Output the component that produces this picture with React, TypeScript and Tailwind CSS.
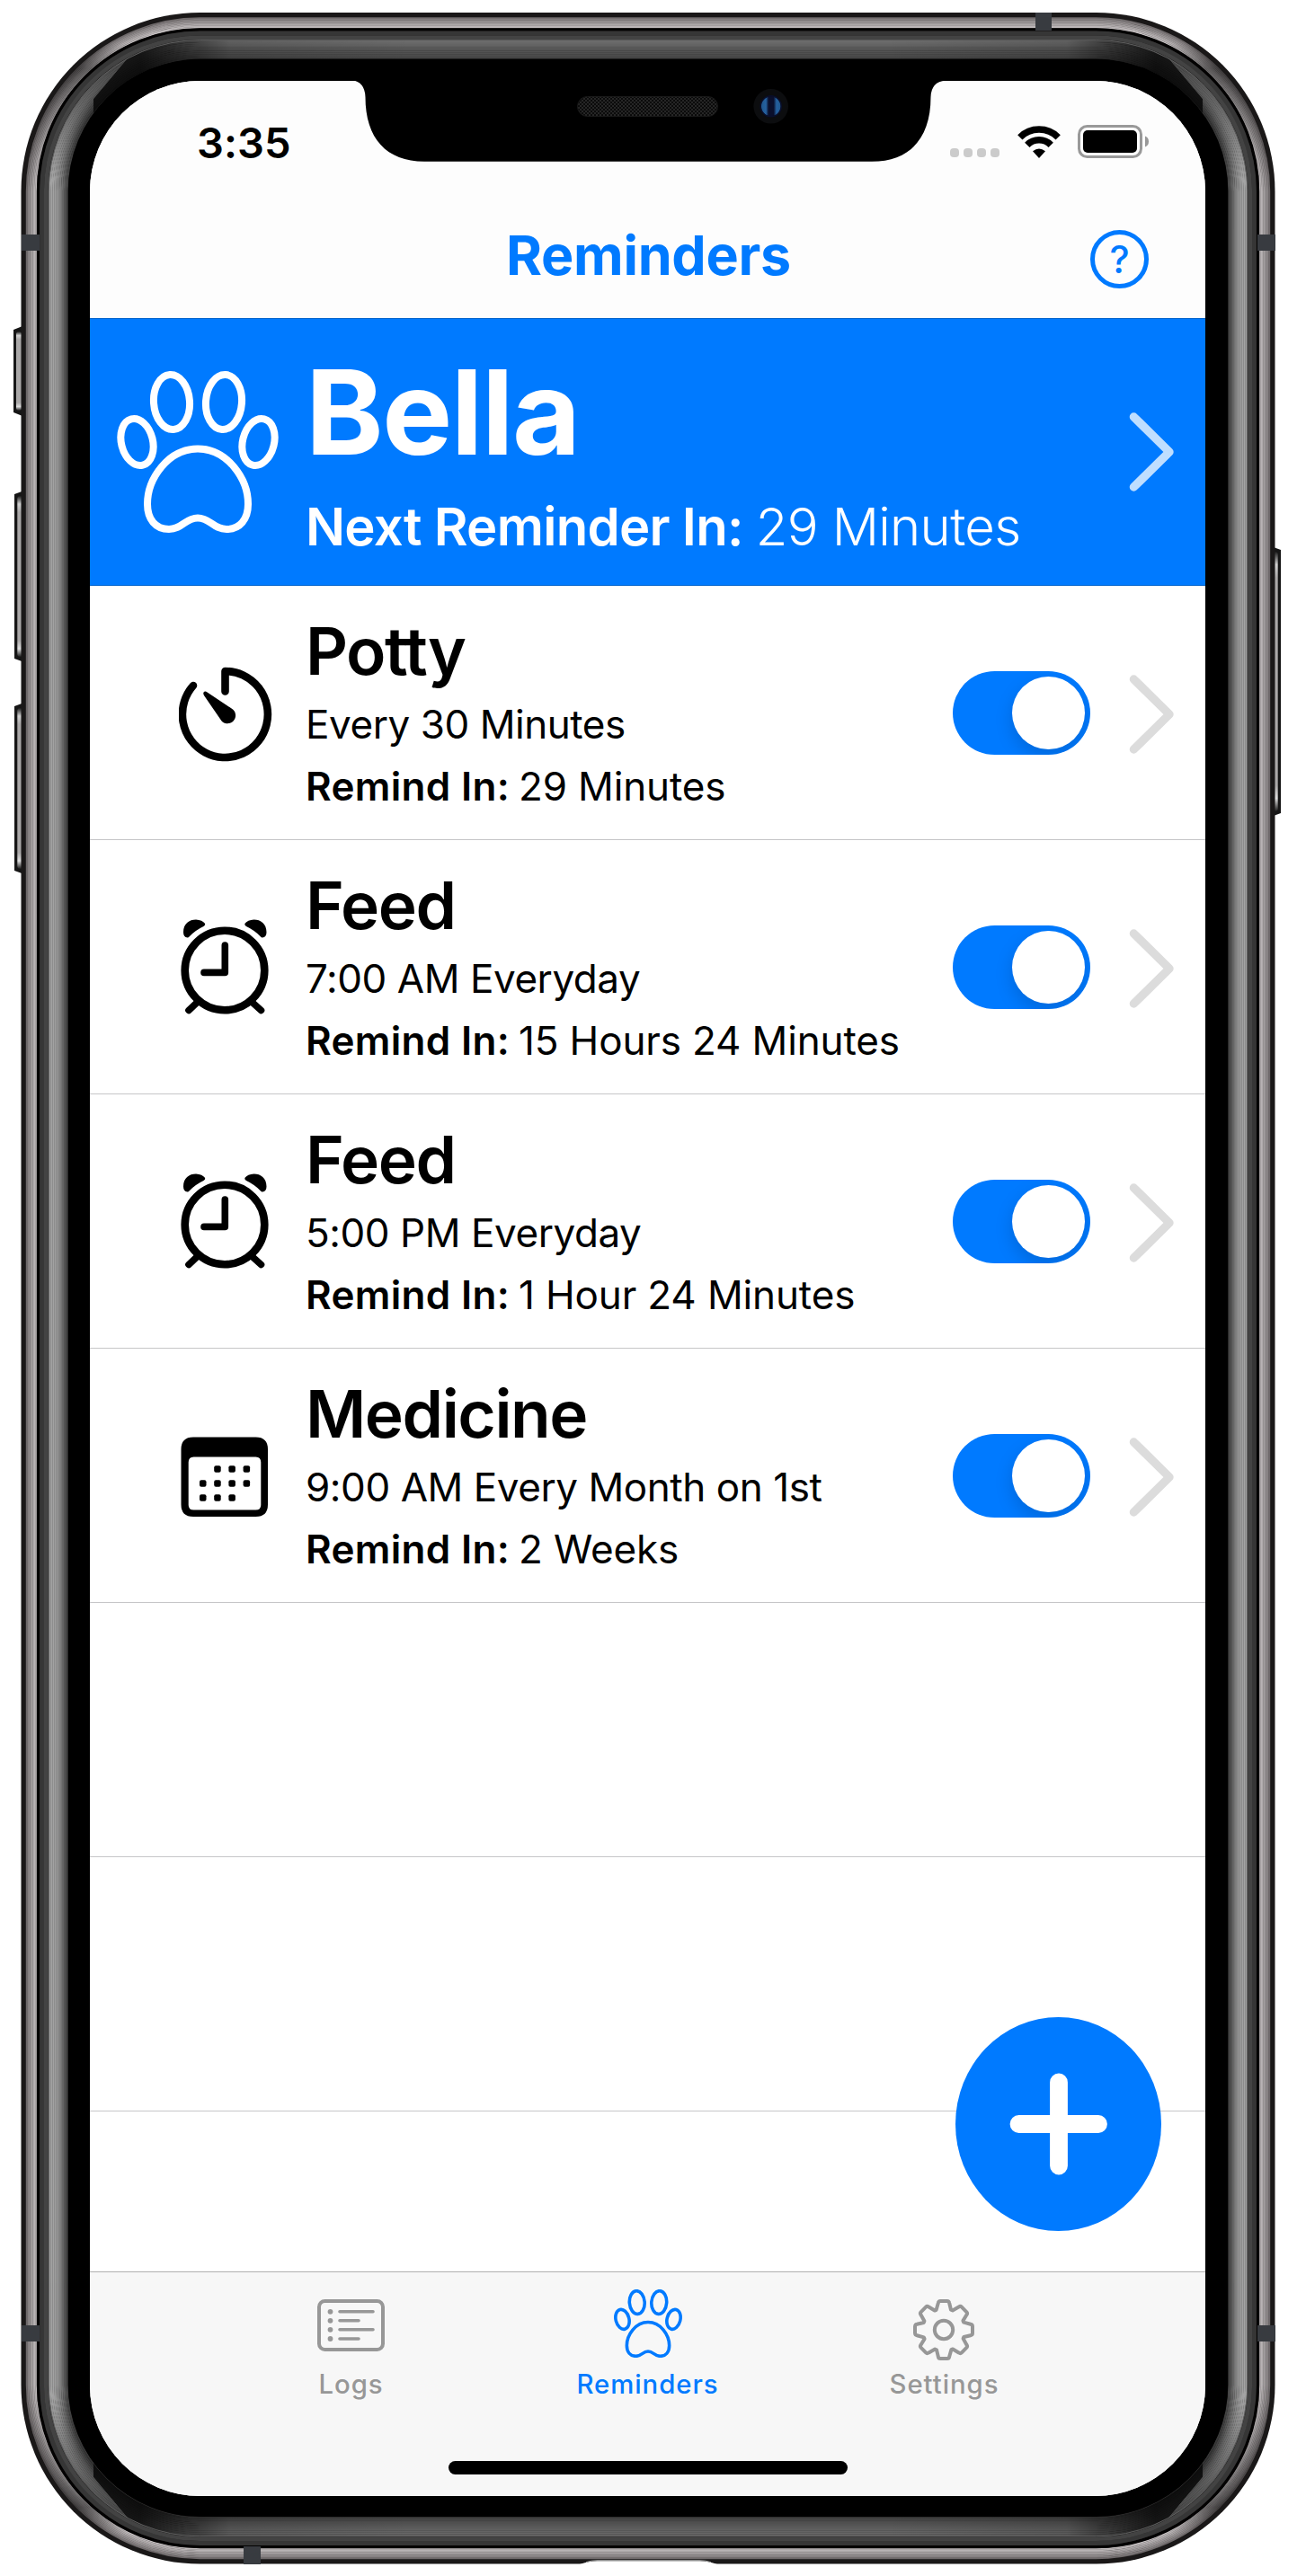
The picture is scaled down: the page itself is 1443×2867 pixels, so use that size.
import type { ReactNode } from "react";

/* One closed outline of the phone body, inset from the outer edge. */
function Ring({ inset, stroke, width = 1.6, clip }: { inset: number; stroke: string; width?: number; clip?: string }) {
  const i = inset + width / 2;
  return (
    <rect
      x={23.5 + i}
      y={14 + i}
      width={1395 - 2 * i}
      height={2839.5 - 2 * i}
      rx={199 - i}
      fill="none"
      stroke={stroke}
      strokeWidth={width}
      clipPath={clip}
    />
  );
}

const steel = ["#6f6a6b", "#827d7e", "#8e898a", "#989394", "#a29d9e", "#ada8a9", "#b8b3b4", "#c2bdbe"];
const sideGlow = ["#a0a0a0", "#a4a4a4", "#a2a2a2", "#9d9d9d", "#959595", "#8b8b8b", "#7f7f7f", "#727272", "#646464", "#555555", "#464646"];
const edgeGlow = ["#6b6b6b", "#686868", "#646464", "#606060", "#5c5c5c", "#585858", "#545454", "#505050", "#4c4c4c", "#484848", "#424242"];

function SideButton({ x, y, w, h, flip }: { x: number; y: number; w: number; h: number; flip?: boolean }) {
  const d = `M0 4 L${w} 0 V${h} L0 ${h - 4} Z`;
  return (
    <g transform={flip ? `translate(${x + w} ${y}) scale(-1 1)` : `translate(${x} ${y})`}>
      <path d={d} fill="#161616" />
      <rect x={w * 0.3} y={6} width={w * 0.62} height={h - 12} rx={3} fill="url(#btn)" />
    </g>
  );
}

function PhoneBody() {
  return (
    <svg className="pointer-events-none absolute inset-0" width="1443" height="2867" viewBox="0 0 1443 2867">
      <defs>
        <linearGradient id="btn" x1="0" y1="0" x2="0" y2="1">
          <stop offset="0" stopColor="#1c1c1c" />
          <stop offset="0.05" stopColor="#d0d0d0" />
          <stop offset="0.1" stopColor="#aaa8a8" />
          <stop offset="0.9" stopColor="#aaa8a8" />
          <stop offset="0.95" stopColor="#dedede" />
          <stop offset="1" stopColor="#1c1c1c" />
        </linearGradient>
        <linearGradient id="cornerShade" x1="0" y1="0" x2="1" y2="0">
          <stop offset="0.07" stopColor="#000" stopOpacity="0.8" />
          <stop offset="0.145" stopColor="#000" stopOpacity="0.12" />
          <stop offset="0.3" stopColor="#000" stopOpacity="0" />
          <stop offset="0.7" stopColor="#000" stopOpacity="0" />
          <stop offset="0.855" stopColor="#000" stopOpacity="0.12" />
          <stop offset="0.93" stopColor="#000" stopOpacity="0.8" />
        </linearGradient>
        <linearGradient id="sideShade" gradientUnits="userSpaceOnUse" x1="0" y1="0" x2="0" y2="2867">
          <stop offset="0.022" stopColor="#000" stopOpacity="0.6" />
          <stop offset="0.07" stopColor="#000" stopOpacity="0" />
          <stop offset="0.93" stopColor="#000" stopOpacity="0" />
          <stop offset="0.978" stopColor="#000" stopOpacity="0.6" />
        </linearGradient>
        <linearGradient id="steelShade" gradientUnits="userSpaceOnUse" x1="0" y1="14" x2="0" y2="2853">
          <stop offset="0.012" stopColor="#000" stopOpacity="0" />
          <stop offset="0.022" stopColor="#000" stopOpacity="0.45" />
          <stop offset="0.07" stopColor="#000" stopOpacity="0" />
          <stop offset="0.93" stopColor="#000" stopOpacity="0" />
          <stop offset="0.978" stopColor="#000" stopOpacity="0.45" />
          <stop offset="0.988" stopColor="#000" stopOpacity="0" />
        </linearGradient>
        <clipPath id="sides">
          <path d="M0 0 L160 43 L104 110 V2757 L160 2824 L0 2867 Z" />
          <path d="M1442 0 L1282 43 L1338 110 V2757 L1282 2824 L1442 2867 Z" />
        </clipPath>
      </defs>

      <SideButton x={15} y={363} w={10} h={100} />
      <SideButton x={16} y={546} w={11} h={191} />
      <SideButton x={16} y={782} w={11} h={191} />
      <SideButton x={1414} y={608} w={11} h={301} flip />

      <rect x="23.5" y="14" width="1395" height="2839.5" rx="199" fill="#1a1818" />
      {steel.map((c, i) => (
        <Ring key={c} inset={5.3 + i * 1.5} stroke={c} width={1.7} />
      ))}
      <Ring inset={5.3} stroke="url(#steelShade)" width={12} />
      <Ring inset={17.3} stroke="#030202" width={3.4} />
      <Ring inset={20.6} stroke="#363636" width={5} />
      <Ring inset={25.4} stroke="#434343" width={4.6} />
      <Ring inset={30} stroke="#2a2a2a" width={1} />
      {edgeGlow.map((c, i) => (
        <Ring key={c} inset={31 + i * 1.9} stroke={c} width={2.1} />
      ))}
      <Ring inset={31} stroke="url(#cornerShade)" width={20.8} />
      {sideGlow.map((c, i) => (
        <Ring key={c} inset={31 + i * 1.9} stroke={c} width={2.1} clip="url(#sides)" />
      ))}
      <Ring inset={31} stroke="url(#sideShade)" width={20.8} clip="url(#sides)" />
      <Ring inset={30.2} stroke="#6a6a6a" width={0.8} />
      <rect x="75.7" y="65.6" width="1290.6" height="2735.4" rx="147" fill="#000" />

      <g fill="#383b40">
        <rect x="1152" y="14" width="18" height="20" />
        <rect x="271" y="2834" width="19" height="20" />
        <rect x="24" y="261" width="20" height="18" />
        <rect x="1399" y="261" width="20" height="18" />
        <rect x="24" y="2588" width="20" height="18" />
        <rect x="1399" y="2588" width="20" height="18" />
      </g>
      <path d="M645 2854 Q655 2850 665 2850.2 H778 Q788 2850 798 2854 Z" fill="#fff" />
      <path d="M652 2851.6 Q658 2849.6 665 2849.6 H778 Q785 2849.6 791 2851.6" fill="none" stroke="#9a9a9a" strokeWidth="1" />
    </svg>
  );
}

function Notch() {
  return (
    <svg className="pointer-events-none absolute top-[89px] left-[380px]" width="684" height="92" viewBox="380 89 684 92">
      <defs>
        <pattern id="mesh" width="4" height="4" patternUnits="userSpaceOnUse">
          <rect width="4" height="4" fill="#0b0b0b" />
          <path d="M0 0 L4 4 M4 0 L0 4" stroke="#2d2d2d" strokeWidth="0.8" />
        </pattern>
        <linearGradient id="lens">
          <stop offset="0" stopColor="#1f568c" />
          <stop offset="0.25" stopColor="#2561a0" />
          <stop offset="0.38" stopColor="#0a0f2c" />
          <stop offset="0.64" stopColor="#0a0f2c" />
          <stop offset="0.78" stopColor="#2561a0" />
          <stop offset="1" stopColor="#1f568c" />
        </linearGradient>
      </defs>
      <path
        d="M380 89 H391 Q406 91 406.5 108 C406.5 154 430 179.7 472 179.7 H970 C1012 179.7 1035.5 154 1035.5 108 Q1036 91 1052 89.8 L1064 89 Z"
        fill="#000"
      />
      <rect x="642.5" y="107.5" width="156" height="22" rx="11" fill="url(#mesh)" stroke="#191919" />
      <circle cx="857.7" cy="118.3" r="19.3" fill="#0c0d0f" />
      <circle cx="857.7" cy="118.3" r="11" fill="url(#lens)" />
      <circle cx="857.7" cy="118.3" r="11.5" fill="none" stroke="#0a0f2c" strokeWidth="1.5" />
    </svg>
  );
}

function Paw({ className, stroke }: { className?: string; stroke: number }) {
  return (
    <svg className={className} viewBox="0 0 180 180" fill="none" stroke="currentColor" strokeWidth={stroke}>
      <ellipse cx="61" cy="34.5" rx="20" ry="30.5" transform="rotate(-4 61 34.5)" />
      <ellipse cx="119" cy="34.5" rx="20" ry="30.5" transform="rotate(4 119 34.5)" />
      <ellipse cx="22.5" cy="79" rx="17.5" ry="26.5" transform="rotate(-14 22.5 79)" />
      <ellipse cx="157.5" cy="79" rx="17.5" ry="26.5" transform="rotate(14 157.5 79)" />
      <path d="M90 86.5 C57 86.5 34 120 34 148 C34 165 43 176 58 176 C73 176 76 163.5 90 163.5 C104 163.5 107 176 122 176 C137 176 146 165 146 148 C146 120 123 86.5 90 86.5 Z" />
    </svg>
  );
}

function Chevron() {
  return (
    <svg className="h-[88px] w-[50px] shrink-0" viewBox="0 0 50 88" fill="none" stroke="currentColor" strokeWidth="9.4" strokeLinecap="round" strokeLinejoin="round">
      <path d="M5.4 5 L45 44 L5.4 83" />
    </svg>
  );
}

function TimerIcon() {
  return (
    <svg className="mt-1 ml-px" width="104" height="106" viewBox="0 0 104 106" fill="none" stroke="#000" strokeWidth="8.6" strokeLinecap="round" strokeLinejoin="round">
      <path d="M51.5 27.5 V5 A47.5 48 0 1 1 16 21" />
      <path d="M27.6 28.6 Q29 26.6 31.6 28.6 L58.6 46.5 A9 9 0 1 1 46.2 58.6 L28 32 Q26.8 30 27.6 28.6 Z" fill="#000" stroke="none" />
    </svg>
  );
}

function AlarmIcon() {
  return (
    <svg width="100" height="106" viewBox="0 0 100 106" fill="none" stroke="#000" strokeWidth="8.6" strokeLinecap="round" strokeLinejoin="round">
      <circle cx="50" cy="57" r="44.3" />
      <path d="M50.3 29 V59.4 H27" strokeWidth="7.6" />
      <path d="M20 92 L10 101.5 M80 92 L90.5 101.5" strokeWidth="7.6" />
      <path d="M8.5 20.5 Q4 20 4 14.5 C4 5 10.5 0.5 18 0.5 Q25 0.8 28.2 5 Q28.5 7 26.5 8 Q17 12.5 10.5 19.5 Q9.5 20.8 8.5 20.5 Z" fill="#000" stroke="none" />
      <path d="M92 20.5 Q96.5 20 96.5 14.5 C96.5 5 90 0.5 82.5 0.5 Q75.5 0.8 72.3 5 Q72 7 74 8 Q83.5 12.5 90 19.5 Q91 20.8 92 20.5 Z" fill="#000" stroke="none" />
    </svg>
  );
}

const calendarDots = [
  [1, 0], [2, 0], [3, 0],
  [0, 1], [1, 1], [2, 1], [3, 1],
  [0, 2], [1, 2], [2, 2],
];

function CalendarIcon() {
  return (
    <svg className="mt-[3px]" width="98" height="90" viewBox="0 0 98 90">
      <path
        fillRule="evenodd"
        d="M14 0.5 H83.5 Q97 0.5 97 14 V75.5 Q97 89 83.5 89 H14 Q0.5 89 0.5 75.5 V14 Q0.5 0.5 14 0.5 Z M14.5 22.5 Q8.7 22.5 8.7 28.5 V76 Q8.7 81.5 14.5 81.5 H83.5 Q89.3 81.5 89.3 76 V28.5 Q89.3 22.5 83.5 22.5 Z"
      />
      {calendarDots.map(([c, r]) => (
        <rect key={`${c}-${r}`} x={21 + c * 16.2} y={32.2 + r * 16} width="7.5" height="7.5" rx="2" />
      ))}
    </svg>
  );
}

function Toggle() {
  return (
    <div className="flex h-[93px] w-[153px] shrink-0 items-center justify-end overflow-hidden rounded-full bg-[#007aff] pr-[6px]">
      <div className="size-[81px] rounded-full bg-white shadow-[0_8px_20px_rgba(0,0,0,0.15)]" />
    </div>
  );
}

function ReminderRow({ icon, title, schedule, remaining }: { icon: ReactNode; title: string; schedule: string; remaining: string }) {
  return (
    <div className="flex h-[283px] items-center border-b border-[#c6c6c8]">
      <div className="ml-[90px] flex w-[120px] shrink-0 items-center justify-center">{icon}</div>
      <div className="ml-[30px] flex grow flex-col pt-1 whitespace-nowrap text-black">
        <h2 className="text-[73px] leading-[90px] font-semibold tracking-[-0.02em]">{title}</h2>
        <p className="mt-[2px] text-[44px] leading-[69px] tracking-[-0.01em]">{schedule}</p>
        <p className="text-[44px] leading-[69px]">
          <b className="font-semibold tracking-[0.007em]">Remind In:</b>
          <span className="ml-[10px] tracking-[-0.003em]">{remaining}</span>
        </p>
      </div>
      <Toggle />
      <div className="mt-[3px] mr-[35px] ml-[43px] text-[#dcdcdc]">
        <Chevron />
      </div>
    </div>
  );
}

const rows = [
  { icon: <TimerIcon />, title: "Potty", schedule: "Every 30 Minutes", remaining: "29 Minutes" },
  { icon: <AlarmIcon />, title: "Feed", schedule: "7:00 AM Everyday", remaining: "15 Hours 24 Minutes" },
  { icon: <AlarmIcon />, title: "Feed", schedule: "5:00 PM Everyday", remaining: "1 Hour 24 Minutes" },
  { icon: <CalendarIcon />, title: "Medicine", schedule: "9:00 AM Every Month on 1st", remaining: "2 Weeks" },
];

function StatusBar() {
  return (
    <div className="flex h-[136px] items-center pr-[62px] pl-[119px]">
      <span className="text-[47px] leading-none font-semibold tracking-[0.001em] text-black">3:35</span>
      <div className="ml-auto flex items-center">
        <div className="mt-[24px] flex gap-[5px]">
          {[0, 1, 2, 3].map((i) => (
            <span key={i} className="h-[10px] w-[10px] rounded-[4px] bg-[#cbcbcb]" />
          ))}
        </div>
        <svg className="ml-[20px]" width="48" height="36" viewBox="0 0 48 36" fill="none" stroke="#000" strokeWidth="7.5">
          <path d="M2.8 12.8 A30 30 0 0 1 45.2 12.8" />
          <path d="M10.8 21.3 A18.5 18.5 0 0 1 37.2 21.3" />
          <path d="M24 36 L17 28.3 Q24 22.5 31 28.3 Z" fill="#000" stroke="none" />
        </svg>
        <svg className="ml-[19px]" width="80" height="38" viewBox="0 0 80 38">
          <rect x="1.5" y="1.5" width="69" height="34" rx="9" fill="none" stroke="#999" strokeWidth="3" />
          <rect x="6" y="6" width="60" height="25" rx="5" fill="#000" />
          <path d="M75 12.5 Q79 14 79 18.5 Q79 23 75 24.5 Z" fill="#999" />
        </svg>
      </div>
    </div>
  );
}

function NavBar() {
  return (
    <div className="flex h-[128px] items-start pr-[63px] text-[#007aff]">
      <div className="w-[130px]" />
      <h1 className="grow text-center text-[61px] leading-[116px] font-bold tracking-[-0.005em]">Reminders</h1>
      <button className="mt-[30px] flex size-[65px] items-center justify-center rounded-full border-[5px] border-current text-[42px] leading-none font-medium">
        ?
      </button>
    </div>
  );
}

function DogHeader() {
  return (
    <div className="flex h-[298px] items-center border-y border-[#0062cc] bg-[#007aff] text-white">
      <Paw className="ml-[30px] size-[180px] shrink-0" stroke={8} />
      <div className="ml-[30px] flex grow flex-col pt-2 whitespace-nowrap">
        <h2 className="text-[131px] leading-[140px] font-bold tracking-[-0.011em]">Bella</h2>
        <p className="mt-[18px] text-[58px] leading-[78px]">
          <b className="font-semibold tracking-[-0.012em]">Next Reminder In:</b>
          <span className="ml-[14px] font-[360] tracking-[-0.011em]">29 Minutes</span>
        </p>
      </div>
      <div className="mr-[35px] text-[#bfdeff]">
        <Chevron />
      </div>
    </div>
  );
}

function LogsIcon() {
  return (
    <svg className="mt-1 mr-px" width="75" height="58" viewBox="0 0 75 58" fill="none" stroke="currentColor" strokeWidth="4" strokeLinecap="round">
      <rect x="2" y="2" width="71" height="54" rx="6.5" />
      <path d="M25 13.8 H62 M25 23.8 H46 M25 33.8 H62 M25 44 H46" strokeWidth="3.6" />
      {[13.8, 23.8, 33.8, 44].map((y) => (
        <circle key={y} cx="14.5" cy={y} r="2.9" fill="currentColor" stroke="none" />
      ))}
    </svg>
  );
}

/* Eight-toothed cog around the centre (34, 34). */
function gearOutline() {
  const pts: string[] = [];
  for (let k = 0; k < 8; k++) {
    const a = (k * Math.PI) / 4;
    const at = (x: number, y: number) =>
      `${(34 + x * Math.cos(a) - y * Math.sin(a)).toFixed(2)} ${(34 + x * Math.sin(a) + y * Math.cos(a)).toFixed(2)}`;
    pts.push(
      `L${at(-6.2, -29.8)} Q${at(-5.8, -32)} ${at(-3.8, -32)} L${at(3.8, -32)} Q${at(5.8, -32)} ${at(6.2, -29.8)} L${at(8, -22.3)} L${at(9.8, -21.6)}`,
    );
  }
  return `M${pts.join(" ").slice(1)} Z`;
}

function GearIcon() {
  return (
    <svg className="mt-[13px] mr-px" width="68" height="68" viewBox="0 0 68 68" fill="none" stroke="currentColor" strokeWidth="4" strokeLinejoin="round">
      <path d={gearOutline()} />
      <circle cx="34" cy="34" r="10.2" />
    </svg>
  );
}

function Tab({ icon, label, active }: { icon: ReactNode; label: string; active?: boolean }) {
  return (
    <div className={active ? "flex w-[330px] flex-col items-center text-[#007aff]" : "flex w-[330px] flex-col items-center text-[#979797]"}>
      <div className="flex h-[76px] items-center">{icon}</div>
      <span className="mt-[10px] text-[29.3px] leading-[40px] font-medium tracking-[0.033em]">{label}</span>
    </div>
  );
}

function TabBar() {
  return (
    <div className="flex h-[250px] shrink-0 flex-col items-center border-t border-[#b0b0b0] bg-[#f7f7f7]">
      <div className="flex pt-[19px]">
        <Tab icon={<LogsIcon />} label="Logs" />
        <Tab active icon={<Paw className="size-[76px]" stroke={8.5} />} label="Reminders" />
        <Tab icon={<GearIcon />} label="Settings" />
      </div>
      <div className="mt-[65px] h-[15px] w-[444px] rounded-full bg-black" />
    </div>
  );
}

export default function App() {
  return (
    <div className="relative h-[2867px] w-[1443px] overflow-hidden bg-white pt-[90px] pl-[100px] font-['Inter',sans-serif]">
      <PhoneBody />
      <div className="relative flex h-[2688px] w-[1241px] flex-col overflow-hidden rounded-[123px] bg-white">
        <header className="bg-[#fdfdfd]">
          <StatusBar />
          <NavBar />
        </header>
        <DogHeader />
        <main className="relative grow">
          {rows.map((r) => (
            <ReminderRow key={r.title + r.schedule} {...r} />
          ))}
          <div className="h-[283px] border-b border-[#c6c6c8]" />
          <div className="h-[283px] border-b border-[#c6c6c8]" />
          <button className="absolute right-[49px] bottom-[45px] flex h-[238px] w-[229px] items-center justify-center rounded-[50%] bg-[#007aff]">
            <svg width="110" height="114" viewBox="0 0 110 114" stroke="#fff" strokeWidth="19.8" strokeLinecap="round">
              <path d="M10.5 57 H99 M55 10.5 V103.5" />
            </svg>
          </button>
        </main>
        <TabBar />
      </div>
      <Notch />
    </div>
  );
}
